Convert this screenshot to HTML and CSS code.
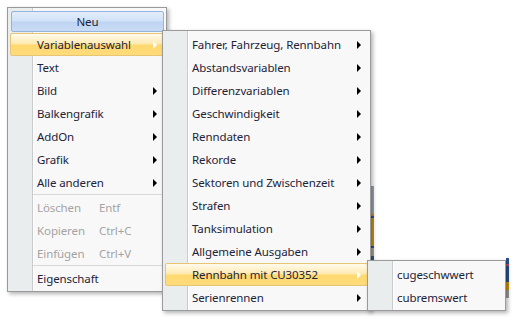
FILE: index.html
```html
<!DOCTYPE html>
<html lang="de">
<head>
  <meta charset="UTF-8">
  <title>Kontextmenü</title>
  <link rel="stylesheet" href="styles.css">
</head>
<body>
  <div class="screen">
    <div class="backdrop backdrop-a"></div>
    <div class="backdrop backdrop-b"></div>

    <!-- Hauptmenü -->
    <div class="menu menu-main">
      <div class="item neu"><span class="neu-btn">Neu</span></div>
      <div class="item active"><span class="label">Variablenauswahl</span><span class="arrow"></span></div>
      <div class="item"><span class="label">Text</span></div>
      <div class="item"><span class="label">Bild</span><span class="arrow"></span></div>
      <div class="item"><span class="label">Balkengrafik</span><span class="arrow"></span></div>
      <div class="item"><span class="label">AddOn</span><span class="arrow"></span></div>
      <div class="item"><span class="label">Grafik</span><span class="arrow"></span></div>
      <div class="item"><span class="label">Alle anderen</span><span class="arrow"></span></div>
      <div class="sep"></div>
      <div class="item disabled"><span class="label short">Löschen</span><span class="key">Entf</span></div>
      <div class="item disabled"><span class="label short">Kopieren</span><span class="key">Ctrl+C</span></div>
      <div class="item disabled"><span class="label short">Einfügen</span><span class="key">Ctrl+V</span></div>
      <div class="sep"></div>
      <div class="item"><span class="label">Eigenschaft</span></div>
    </div>

    <!-- Variablenauswahl -->
    <div class="menu menu-vars">
      <div class="item"><span class="label">Fahrer, Fahrzeug, Rennbahn</span><span class="arrow"></span></div>
      <div class="item"><span class="label">Abstandsvariablen</span><span class="arrow"></span></div>
      <div class="item"><span class="label">Differenzvariablen</span><span class="arrow"></span></div>
      <div class="item"><span class="label">Geschwindigkeit</span><span class="arrow"></span></div>
      <div class="item"><span class="label">Renndaten</span><span class="arrow"></span></div>
      <div class="item"><span class="label">Rekorde</span><span class="arrow"></span></div>
      <div class="item"><span class="label">Sektoren und Zwischenzeit</span><span class="arrow"></span></div>
      <div class="item"><span class="label">Strafen</span><span class="arrow"></span></div>
      <div class="item"><span class="label">Tanksimulation</span><span class="arrow"></span></div>
      <div class="item"><span class="label">Allgemeine Ausgaben</span><span class="arrow"></span></div>
      <div class="item active"><span class="label">Rennbahn mit CU30352</span><span class="arrow"></span></div>
      <div class="item"><span class="label">Serienrennen</span><span class="arrow"></span></div>
    </div>

    <!-- Rennbahn mit CU30352 -->
    <div class="menu menu-cu">
      <div class="item"><span class="label">cugeschwwert</span></div>
      <div class="item"><span class="label">cubremswert</span></div>
    </div>
  </div>
</body>
</html>
```

FILE: styles.css
```css
body {
  margin: 0;
  background: #fff;
  font-family: 'Noto Sans', 'Open Sans', sans-serif;
  font-size: 11.5px;
  letter-spacing: -0.1px;
  color: #1d2438;
}
.screen {
  position: relative;
  width: 516px;
  height: 321px;
  overflow: hidden;
}

/* app content peeking out behind the menus */
.backdrop {
  position: absolute;
  width: 3px;
}
.backdrop-a {
  left: 371px;
  top: 186px;
  height: 120px;
  background: linear-gradient(#98a3ad 0 28px, #c28a14 28px 30px, #1f4fa0 30px 32px, #c8900f 32px 60px, #1f4fa0 60px 62px, #a6a090 62px 70px, #3a5788 70px);
}
.backdrop-b {
  left: 506px;
  top: 258px;
  height: 40px;
  background: linear-gradient(#2a4f8a 0 6px, #b05060 6px 8px, #2a4f8a 8px 24px, #c8900f 24px 32px, #9a9a9a 32px);
}

.menu {
  position: absolute;
  box-sizing: border-box;
  padding: 2px 0 1px;
  border: 1px solid #9a9a9a;
  background: linear-gradient(to right, #e9eded 0 24px, #c9cccd 24px 25px, #fdfdfd 25px 26px, #f8f8f8 26px);
  box-shadow: 2px 2px 4px rgba(0, 0, 0, 0.3);
}
.menu-main {
  left: 7px;
  top: 7px;
  width: 160px;
}
.menu-vars {
  left: 162px;
  top: 30px;
  width: 209px;
}
.menu-cu {
  left: 367px;
  top: 260px;
  width: 139px;
}

.item {
  box-sizing: border-box;
  height: 23px;
  margin: 0 2px;
  padding: 0 6px 0 26px;
  border: 1px solid transparent;
  border-radius: 2px;
  display: flex;
  align-items: center;
  white-space: nowrap;
}
.label {
  flex: 1;
}
.label.short {
  flex: 0 0 62px;
}
.key {
  flex: 1;
}
.arrow {
  width: 0;
  height: 0;
  border-top: 4px solid transparent;
  border-bottom: 4px solid transparent;
  border-left: 4px solid #000;
}
.item.active {
  border-color: #e6c575;
  background: linear-gradient(#fffbed, #ffeab2 45%, #ffd86f 55%, #ffdb7c);
}
.item.active .arrow {
  border-left-color: #fff;
}
.item.disabled {
  color: #a3a3a3;
}

.item.neu {
  padding: 1px 0 1px 1px;
  border: none;
}
.neu-btn {
  box-sizing: border-box;
  flex: 1;
  height: 21px;
  border: 1px solid #94b3dd;
  border-radius: 2px;
  background: linear-gradient(#e3edfa, #d2e2f8 45%, #bed4f2 55%, #cadcf5);
  display: flex;
  align-items: center;
  justify-content: center;
}

.sep {
  height: 1px;
  margin: 0 2px 1px 25px;
  background: #d8d8d8;
}
```
